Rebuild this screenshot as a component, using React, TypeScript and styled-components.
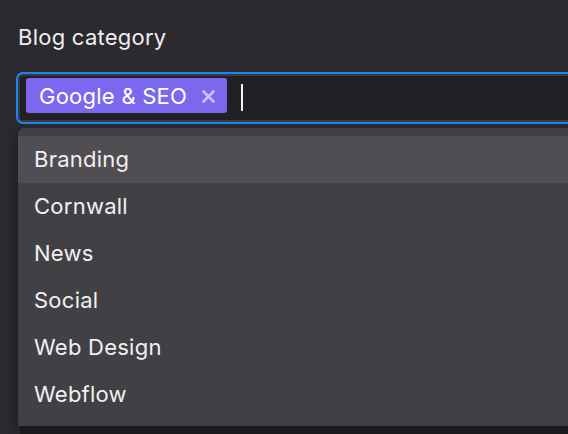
import React from 'react';
import styled, { createGlobalStyle } from 'styled-components';

const GlobalStyle = createGlobalStyle`
  html, body {
    margin: 0;
    padding: 0;
    background: #2c2a2e;
    overflow: hidden;
  }
  body {
    font-family: Inter, "Noto Sans", sans-serif;
    letter-spacing: 0.25px;
    -webkit-font-smoothing: antialiased;
  }
`;

const Page = styled.div`
  width: 568px;
  height: 434px;
  padding: 23px 0 0 18px;
  box-sizing: border-box;
  display: flex;
  flex-direction: column;
  overflow: hidden;
`;

const Label = styled.label`
  font-size: 22px;
  line-height: 28px;
  color: #efeef0;
  margin-bottom: 23px;
`;

const Field = styled.div`
  position: relative;
  width: 580px;
`;

const InputBox = styled.div`
  height: 48px;
  box-sizing: border-box;
  border: 2px solid #3b393d;
  border-right: none;
  border-radius: 5px 0 0 5px;
  outline: 2px solid #1a86f3;
  background: #222024;
  padding: 2px 6px;
  display: flex;
  align-items: flex-start;
  gap: 14px;
`;

const Tag = styled.span`
  height: 35px;
  display: inline-flex;
  align-items: center;
  gap: 14px;
  padding: 0 11px 0 13px;
  background: #7b68ee;
  border-radius: 3px;
  color: #ffffff;
  font-size: 22px;
  white-space: nowrap;
`;

const Remove = styled.svg`
  width: 15px;
  height: 15px;
  margin-top: 1px;
  color: #cbc2f7;
`;

const Caret = styled.span`
  width: 2px;
  height: 27px;
  margin-top: 6px;
  background: #f4f4f4;
`;

const Menu = styled.ul`
  list-style: none;
  margin: 6px 0 0;
  padding: 8px 0;
  width: 580px;
  background: #414044;
  border-radius: 6px 0 0 0;
  box-shadow: 2px 8px 0 #1c1a1d, -4px 4px 12px rgba(0, 0, 0, 0.25);
`;

const Option = styled.li<{ $active?: boolean }>`
  height: 47px;
  box-sizing: border-box;
  padding: 0 0 2px 16px;
  display: flex;
  align-items: center;
  font-size: 22px;
  color: #f1f0f2;
  background: ${({ $active }) => ($active ? '#504e52' : 'transparent')};
`;

const options = ['Branding', 'Cornwall', 'News', 'Social', 'Web Design', 'Webflow'];

export default function App() {
  return (
    <>
      <GlobalStyle />
      <Page>
        <Label>Blog category</Label>
        <Field>
          <InputBox>
            <Tag>
              Google &amp; SEO
              <Remove viewBox="0 0 15 15" fill="none" stroke="currentColor" strokeWidth="2.6" strokeLinecap="round">
                <path d="M2.5 2.5l10 10M12.5 2.5l-10 10" />
              </Remove>
            </Tag>
            <Caret />
          </InputBox>
          <Menu>
            {options.map((o, i) => (
              <Option key={o} $active={i === 0}>
                {o}
              </Option>
            ))}
          </Menu>
        </Field>
      </Page>
    </>
  );
}
